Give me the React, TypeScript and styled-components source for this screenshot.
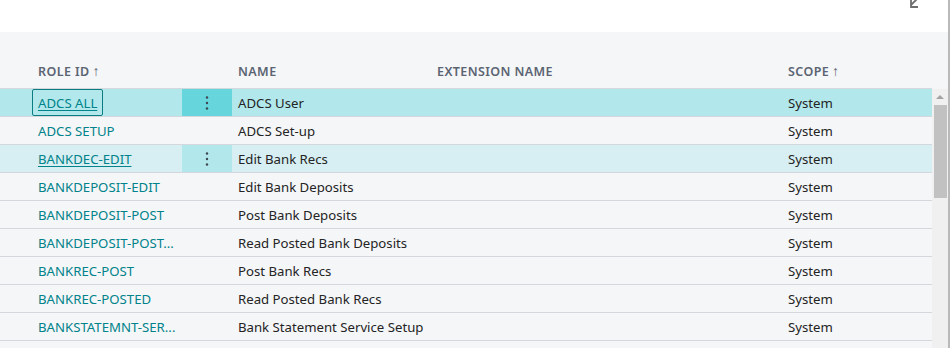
import React from "react";
import styled, { createGlobalStyle } from "styled-components";

const GlobalStyle = createGlobalStyle`
  body {
    margin: 0;
    background: #ffffff;
    font-family: "Segoe UI", "Noto Sans", "Open Sans", sans-serif;
  }
`;

const Page = styled.div`
  width: 948px;
  height: 348px;
  display: flex;
  flex-direction: column;
  border-right: 2px solid #b9b9b9;
  overflow: hidden;
`;

const TopBar = styled.div`
  height: 32px;
  background: #ffffff;
  display: flex;
  justify-content: flex-end;
  align-items: flex-start;
  padding-right: 24px;
`;

const Content = styled.div`
  flex: 1;
  background: #f5f6f8;
  display: flex;
  flex-direction: column;
  padding-top: 24px;
  min-height: 0;
`;

const cols = "32px 150px 50px 199px 351px 150px";

const HeaderRow = styled.div`
  display: grid;
  grid-template-columns: ${cols};
  height: 32px;
  border-bottom: 1px solid #d4d7dc;
  width: 932px;
`;

const HeaderCell = styled.div`
  padding-left: 6px;
  font-size: 12.5px;
  font-weight: 600;
  letter-spacing: 0.4px;
  color: #5b6472;
  display: flex;
  align-items: center;
  padding-bottom: 2px;
`;

const Arrow = styled.span`
  margin-left: 3px;
  font-weight: 400;
  font-size: 14px;
  line-height: 1;
`;

const Body = styled.div`
  flex: 1;
  display: flex;
  min-height: 0;
`;

const Rows = styled.div`
  width: 932px;
`;

const Row = styled.div<{ $state?: "selected" | "hover" }>`
  display: grid;
  grid-template-columns: ${cols};
  height: 27px;
  border-bottom: 1px solid #d4d7dc;
  background: ${(p) =>
    p.$state === "selected" ? "#b2e8ec" : p.$state === "hover" ? "#d7eff2" : "transparent"};
`;

const Cell = styled.div`
  padding-left: 6px;
  display: flex;
  align-items: center;
  font-size: 13.2px;
  color: #242424;
  white-space: nowrap;
  overflow: hidden;
`;

const LinkCell = styled(Cell)<{ $focus?: boolean; $underline?: boolean }>`
  color: #00838a;
  text-decoration: ${(p) => (p.$underline ? "underline" : "none")};
  text-underline-offset: 2px;
  span {
    display: inline-flex;
    align-items: center;
    height: 25px;
    margin-left: -6px;
    padding: 0 5px;
    border: 1px solid ${(p) => (p.$focus ? "#0b7d82" : "transparent")};
    border-radius: 2px;
  }
`;

const DotsCell = styled.div<{ $state?: "selected" | "hover" }>`
  display: flex;
  align-items: center;
  justify-content: center;
  background: ${(p) =>
    p.$state === "selected" ? "#66d5dc" : p.$state === "hover" ? "#b2e8ec" : "transparent"};
  color: #3c4650;
`;

const Scrollbar = styled.div`
  width: 16px;
  background: #f0f0f0;
  display: flex;
  flex-direction: column;
  align-items: center;
  padding-top: 6px;
`;

const ScrollUp = styled.div`
  width: 0;
  height: 0;
  border-left: 4px solid transparent;
  border-right: 4px solid transparent;
  border-bottom: 4px solid #a3a3a3;
`;

const Thumb = styled.div`
  margin-top: 6px;
  width: 13px;
  height: 93px;
  background: #c1c1c1;
`;

const Dots = () => (
  <svg width="4" height="16" viewBox="0 0 4 16">
    <circle cx="2" cy="2.5" r="1.2" fill="currentColor" />
    <circle cx="2" cy="8" r="1.2" fill="currentColor" />
    <circle cx="2" cy="13.5" r="1.2" fill="currentColor" />
  </svg>
);

const ShrinkIcon = () => (
  <svg width="16" height="16" viewBox="0 0 16 16" style={{ marginTop: -7 }}>
    <path d="M14 1 L3 12 M3 5.5 V14 H10" stroke="#6e6e6e" strokeWidth="1.8" fill="none" />
  </svg>
);

type RoleRow = {
  id: string;
  name: string;
  state?: "selected" | "hover";
};

const rows: RoleRow[] = [
  { id: "ADCS ALL", name: "ADCS User", state: "selected" },
  { id: "ADCS SETUP", name: "ADCS Set-up" },
  { id: "BANKDEC-EDIT", name: "Edit Bank Recs", state: "hover" },
  { id: "BANKDEPOSIT-EDIT", name: "Edit Bank Deposits" },
  { id: "BANKDEPOSIT-POST", name: "Post Bank Deposits" },
  { id: "BANKDEPOSIT-POST...", name: "Read Posted Bank Deposits" },
  { id: "BANKREC-POST", name: "Post Bank Recs" },
  { id: "BANKREC-POSTED", name: "Read Posted Bank Recs" },
  { id: "BANKSTATEMNT-SER...", name: "Bank Statement Service Setup" },
];

export default function App() {
  return (
    <>
      <GlobalStyle />
      <Page>
        <TopBar>
          <ShrinkIcon />
        </TopBar>
        <Content>
          <HeaderRow>
            <div />
            <HeaderCell>
              ROLE ID<Arrow>↑</Arrow>
            </HeaderCell>
            <div />
            <HeaderCell>NAME</HeaderCell>
            <HeaderCell>EXTENSION NAME</HeaderCell>
            <HeaderCell>
              SCOPE<Arrow>↑</Arrow>
            </HeaderCell>
          </HeaderRow>
          <Body>
            <Rows>
              {rows.map((r) => (
                <Row key={r.id} $state={r.state}>
                  <div />
                  <LinkCell $focus={r.state === "selected"} $underline={!!r.state}>
                    <span>{r.id}</span>
                  </LinkCell>
                  <DotsCell $state={r.state}>{r.state && <Dots />}</DotsCell>
                  <Cell>{r.name}</Cell>
                  <Cell />
                  <Cell>System</Cell>
                </Row>
              ))}
            </Rows>
            <Scrollbar>
              <ScrollUp />
              <Thumb />
            </Scrollbar>
          </Body>
        </Content>
      </Page>
    </>
  );
}
